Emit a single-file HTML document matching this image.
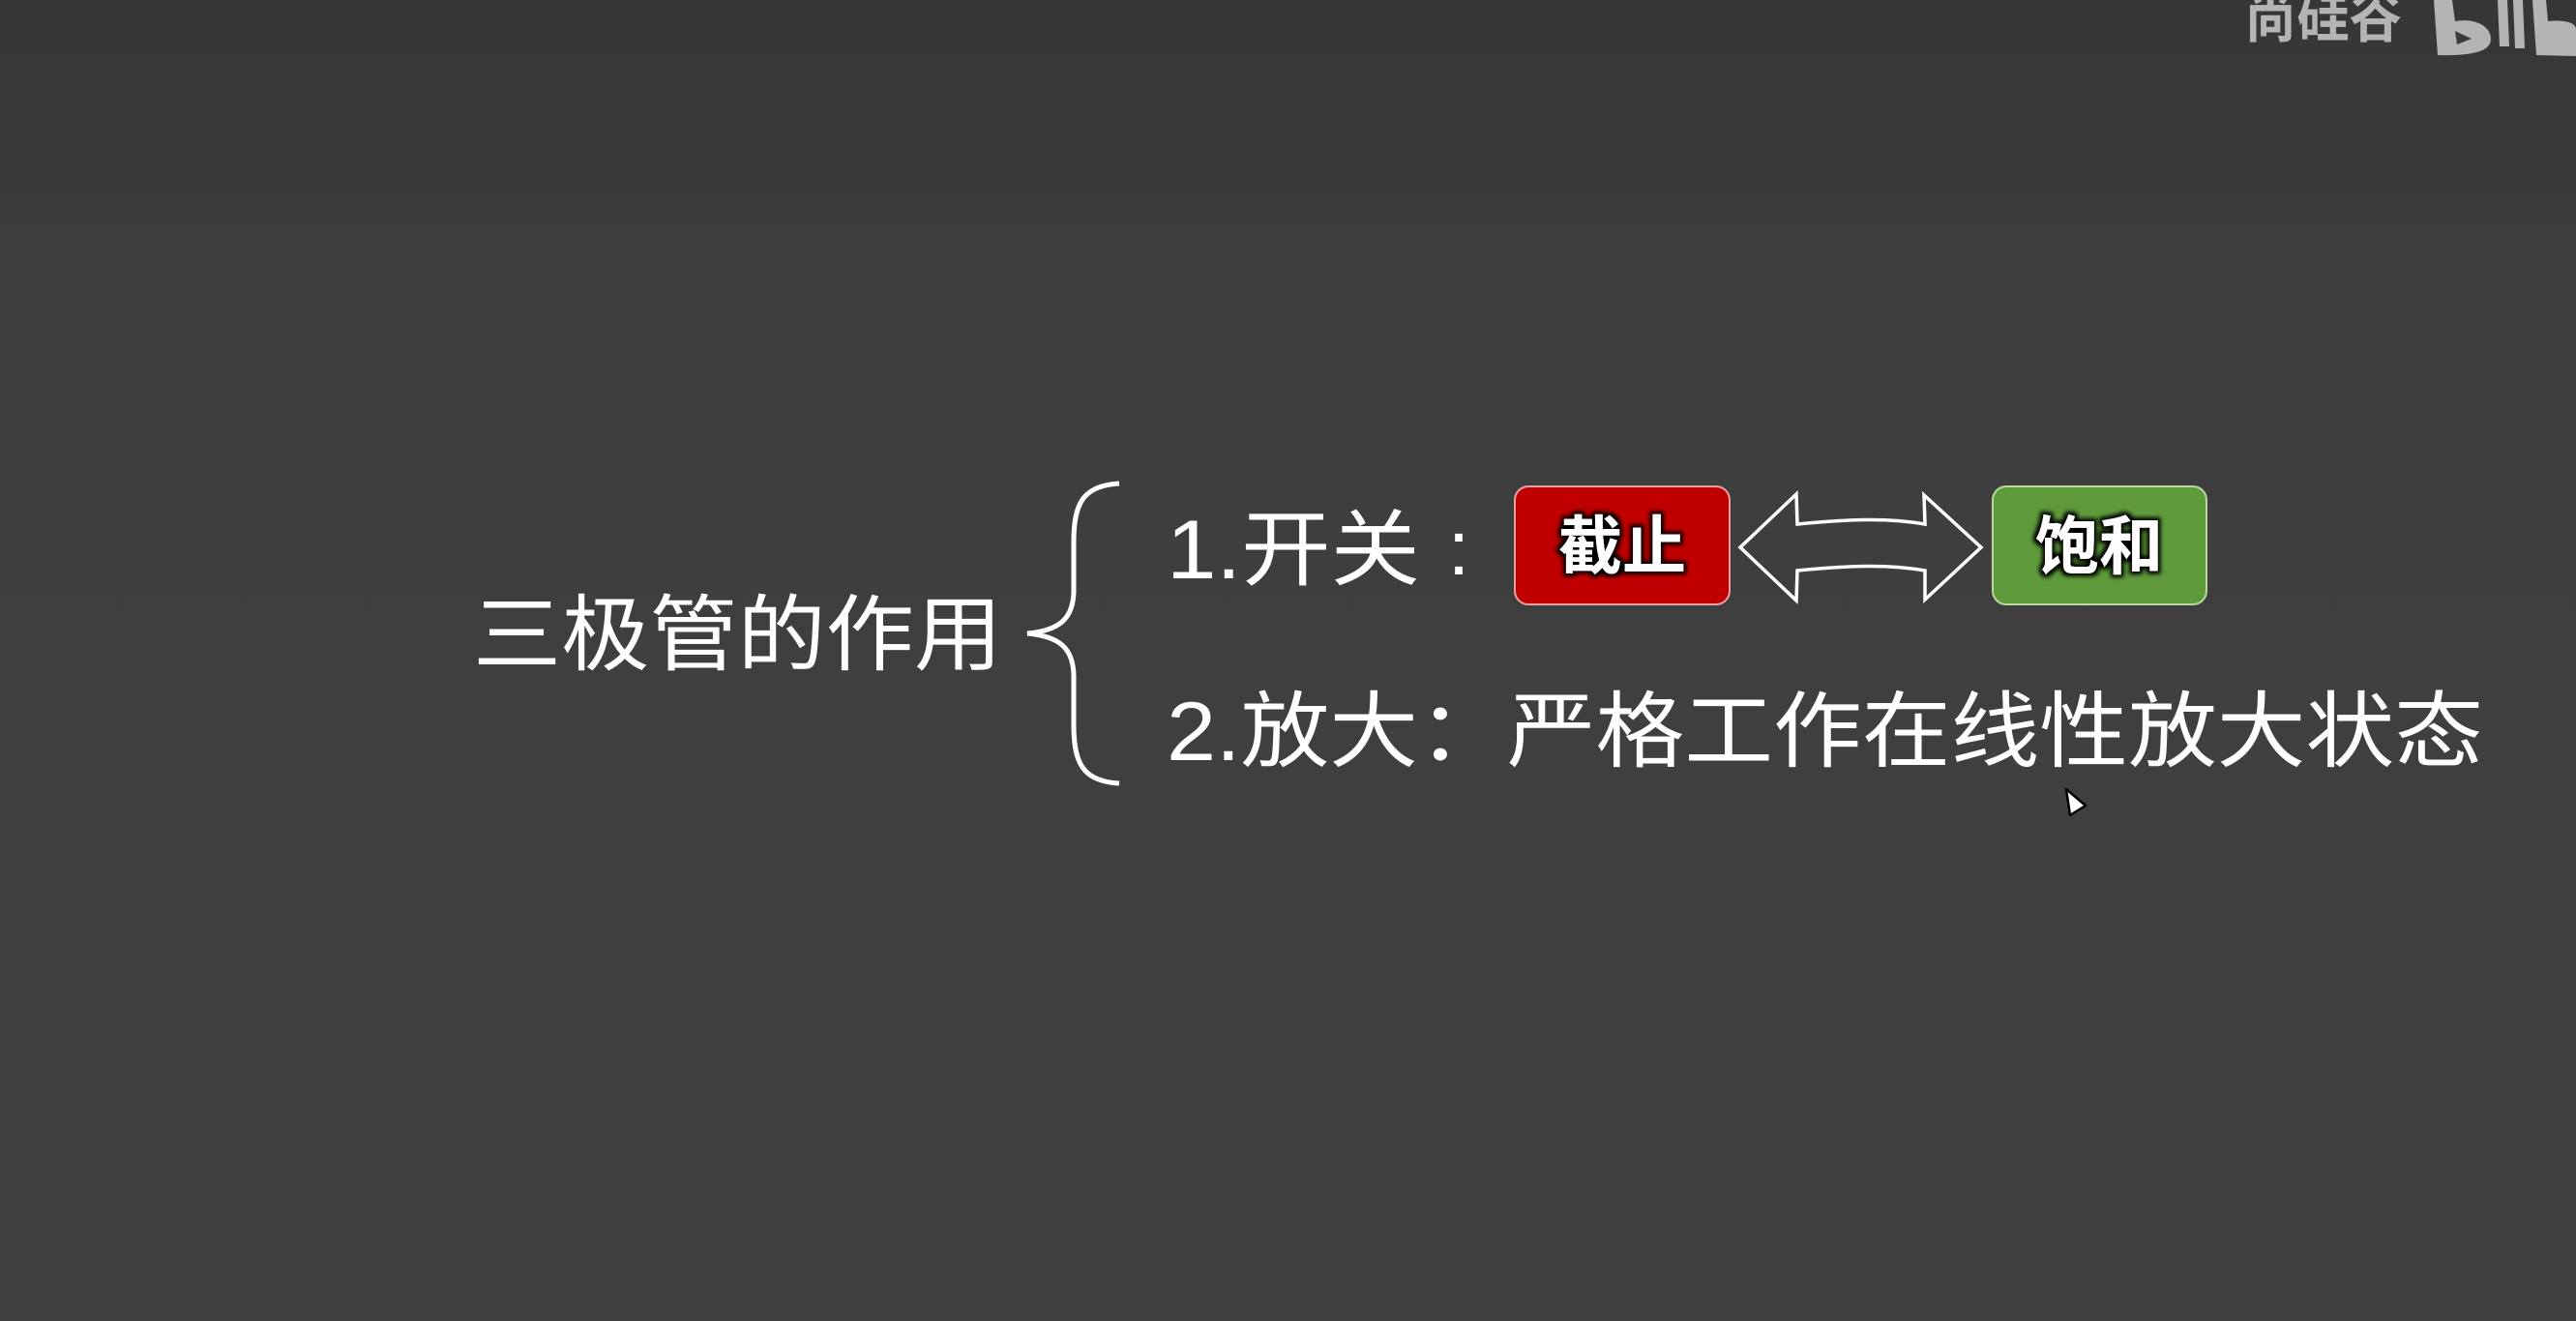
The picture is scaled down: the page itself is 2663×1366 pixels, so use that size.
<!DOCTYPE html>
<html><head><meta charset="utf-8"><style>
html,body{margin:0;padding:0;background:#404040;}
svg{display:block;}
text{font-family:"Liberation Sans","Noto Sans CJK SC",sans-serif;}
</style></head><body>
<svg width="2663" height="1366" viewBox="0 0 2663 1366" xmlns="http://www.w3.org/2000/svg">
<defs>
<linearGradient id="bg" x1="0" y1="0" x2="0" y2="1">
<stop offset="0" stop-color="#363636"/><stop offset="0.25" stop-color="#3e3e3e"/><stop offset="1" stop-color="#404040"/>
</linearGradient>
<filter id="sh" x="-20%" y="-20%" width="140%" height="140%">
<feMorphology in="SourceAlpha" operator="dilate" radius="3" result="d"/>
<feGaussianBlur in="d" stdDeviation="2" result="b"/>
<feFlood flood-color="#000"/><feComposite in2="b" operator="in" result="s"/>
<feMerge><feMergeNode in="s"/><feMergeNode in="SourceGraphic"/></feMerge>
</filter>
</defs>
<rect width="2663" height="1366" fill="url(#bg)"/>
<text x="2320" y="38" font-size="58" font-weight="bold" fill="#b4b4b4" textLength="163" lengthAdjust="spacingAndGlyphs">尚硅谷</text>
<g fill="#b4b4b4">
<path d="M2516 0 L2535 0 L2538 22 C2560 18 2575 28 2575 40 C2575 52 2560 58 2520 57 Z"/>
<path d="M2582 0 L2592 0 L2594 48 L2584 48 Z"/>
<path d="M2598 0 L2608 0 L2610 50 L2600 50 Z"/>
<path d="M2618 0 L2632 0 L2634 22 C2655 20 2663 25 2663 30 L2663 58 L2622 57 Z"/>
</g>
<path d="M2538 32 L2555 40 L2540 46 Z" fill="#3a3a3a"/>
<text x="489" y="686" font-size="86" fill="#fff" textLength="547" lengthAdjust="spacingAndGlyphs">三极管的作用</text>
<path d="M1157 500 C1120 502 1110 520 1110 560 L1110 610 C1110 640 1095 652 1062 655 C1095 658 1110 670 1110 700 L1110 750 C1110 790 1120 808 1157 810" fill="none" stroke="#fff" stroke-width="5"/>
<text x="1206" y="598" font-size="86" fill="#fff" textLength="262" lengthAdjust="spacingAndGlyphs">1.开关</text>
<text x="1508" y="594" font-size="80" fill="#fff" text-anchor="middle">:</text>
<text x="1206" y="786" font-size="86" fill="#fff" textLength="1361" lengthAdjust="spacingAndGlyphs">2.放大：严格工作在线性放大状态</text>
<rect x="1566" y="503" width="222" height="122" rx="14" fill="#c00000" stroke="#e8a0a0" stroke-width="2"/>
<text x="1677" y="588" font-size="66" font-weight="bold" fill="#fff" text-anchor="middle" filter="url(#sh)">截止</text>
<rect x="2060" y="503" width="221" height="122" rx="14" fill="#5e9a3a" stroke="#b8d8a0" stroke-width="2"/>
<text x="2170" y="588" font-size="66" font-weight="bold" fill="#fff" text-anchor="middle" filter="url(#sh)">饱和</text>
<path d="M1799 566 L1857 511 L1858 542 C1910 537 1950 535 1990 542 L1989 512 L2048 566 L1990 620 L1990 590 C1950 583 1910 585 1858 590 L1857 621 Z" fill="none" stroke="#fff" stroke-width="3.5" stroke-linejoin="miter"/>
<path d="M2136 816 L2156 833 L2140 843 Z" fill="#fff" stroke="#000" stroke-width="2.5" stroke-linejoin="round"/>
</svg>
</body></html>
